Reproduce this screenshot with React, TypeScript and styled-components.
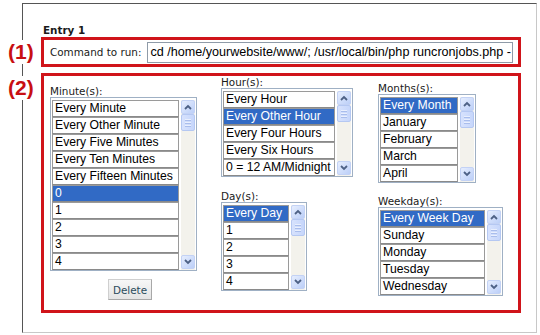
import React from 'react';
import styled, { createGlobalStyle } from 'styled-components';

const GlobalStyle = createGlobalStyle`
  html, body {
    margin: 0;
    padding: 0;
    background: #fff;
  }
  body {
    width: 540px;
    height: 335px;
    overflow: hidden;
  }
`;

const Frame = styled.div`
  position: relative;
  box-sizing: border-box;
  margin: 3px 0 0 22px;
  width: 515px;
  height: 330px;
  padding: 20px 0 0 18px;
  border-left: 1px solid #555;
  border-top: 1px solid #555;
  border-right: 1px solid #c8c8c8;
  border-bottom: 1px solid #c8c8c8;
  font-family: 'DejaVu Sans', Verdana, sans-serif;
  color: #1a1a1a;
`;

const Marker = styled.div<{ $top: number }>`
  position: absolute;
  left: -16px;
  top: ${(p) => p.$top}px;
  background: #fff;
  padding: 0 1px;
  font-family: 'Liberation Sans', Arial, sans-serif;
  font-weight: bold;
  font-size: 21px;
  line-height: 24px;
  color: #c80f12;
`;

const EntryTitle = styled.div`
  margin-left: 2px;
  font-weight: bold;
  font-size: 10.4px;
  line-height: 13px;
`;

const RedBox = styled.div`
  box-sizing: border-box;
  width: 480px;
  border: 3px solid #d0141a;
`;

const CommandBox = styled(RedBox)`
  height: 30px;
  display: flex;
  align-items: center;
  gap: 6px;
  padding-left: 6px;
`;

const FieldLabel = styled.span`
  font-size: 10.4px;
  line-height: 12px;
  white-space: nowrap;
`;

const CommandInput = styled.div`
  box-sizing: border-box;
  width: 366px;
  height: 21px;
  border: 1px solid #8f9ba8;
  padding: 0 0 0 2px;
  font-family: 'Liberation Sans', Arial, sans-serif;
  font-size: 12.6px;
  line-height: 19px;
  color: #000;
  white-space: nowrap;
  overflow: hidden;
`;

const ScheduleBox = styled(RedBox)`
  margin-top: 6px;
  height: 240px;
  display: flex;
  padding-left: 6px;
`;

const Column = styled.div<{ $width?: number; $pad: number }>`
  display: flex;
  flex-direction: column;
  align-items: flex-start;
  width: ${(p) => (p.$width ? `${p.$width}px` : 'auto')};
  padding-top: ${(p) => p.$pad}px;
`;

const Field = styled.div<{ $gap?: number }>`
  display: flex;
  flex-direction: column;
  margin-top: ${(p) => p.$gap || 0}px;
`;

const ListBox = styled.div<{ $width: number }>`
  box-sizing: border-box;
  width: ${(p) => p.$width}px;
  display: flex;
  border: 1px solid #9fb0c4;
  padding: 2px 1px 0 1px;
  gap: 2px;
  background: #fff;
`;

const Options = styled.div`
  flex: 1;
  display: flex;
  flex-direction: column;
  min-width: 0;
`;

const Option = styled.div<{ $selected?: boolean }>`
  box-sizing: border-box;
  height: 17px;
  border: 1px solid #9a9a9a;
  border-bottom-color: #8a8a8a;
  padding-left: 2px;
  font-family: 'Liberation Sans', Arial, sans-serif;
  font-size: 12.2px;
  line-height: 15px;
  white-space: nowrap;
  overflow: hidden;
  color: ${(p) => (p.$selected ? '#fff' : '#000')};
  background: ${(p) => (p.$selected ? '#316ac5' : '#fff')};
`;

const ScrollTrack = styled.div`
  width: 14px;
  display: flex;
  flex-direction: column;
  padding-bottom: 1px;
  background: #f3f2ec;
`;

const ScrollButton = styled.div`
  box-sizing: border-box;
  width: 14px;
  height: 14px;
  border: 1px solid #c3d2f5;
  border-radius: 2px;
  background: linear-gradient(135deg, #e6eefe, #bccff8);
  display: flex;
  align-items: center;
  justify-content: center;
`;

const Thumb = styled.div`
  box-sizing: border-box;
  width: 14px;
  height: 17px;
  border: 1px solid #b5c8f2;
  border-radius: 2px;
  background: linear-gradient(90deg, #d7e2fd, #c6d6fb);
  display: flex;
  flex-direction: column;
  align-items: center;
  justify-content: center;
  gap: 1px;
`;

const Grip = styled.span`
  width: 6px;
  height: 1px;
  background: #e9effd;
  box-shadow: 0 1px 0 #a9bdec;
  margin-bottom: 1px;
`;

const Spacer = styled.div`
  flex: 1;
`;

const DeleteButton = styled.button`
  box-sizing: border-box;
  width: 44px;
  height: 21px;
  margin: 8px 0 0 58px;
  padding: 0;
  border: 1px solid #cfcfcf;
  border-right-color: #a8a8a8;
  border-bottom-color: #a8a8a8;
  background: linear-gradient(#f7f7f7, #e4e4e4);
  font-family: 'DejaVu Sans', Verdana, sans-serif;
  font-size: 10.4px;
  color: #2a4b5b;
`;

const Chevron = ({ up }: { up?: boolean }) => (
  <svg width="8" height="6" viewBox="0 0 8 6">
    <path
      d={up ? 'M1 5 L4 2 L7 5' : 'M1 1 L4 4 L7 1'}
      fill="none"
      stroke="#4d6185"
      strokeWidth="1.8"
    />
  </svg>
);

const ScrollBar = () => (
  <ScrollTrack>
    <ScrollButton>
      <Chevron up />
    </ScrollButton>
    <Thumb>
      <Grip />
      <Grip />
      <Grip />
    </Thumb>
    <Spacer />
    <ScrollButton>
      <Chevron />
    </ScrollButton>
  </ScrollTrack>
);

type SelectProps = {
  label: string;
  width: number;
  items: string[];
  selected: number;
  gap?: number;
};

const Select = ({ label, width, items, selected, gap }: SelectProps) => (
  <Field $gap={gap}>
    <FieldLabel>{label}</FieldLabel>
    <ListBox $width={width}>
      <Options>
        {items.map((item, i) => (
          <Option key={item} $selected={i === selected}>
            {item}
          </Option>
        ))}
      </Options>
      <ScrollBar />
    </ListBox>
  </Field>
);

const minutes = [
  'Every Minute',
  'Every Other Minute',
  'Every Five Minutes',
  'Every Ten Minutes',
  'Every Fifteen Minutes',
  '0',
  '1',
  '2',
  '3',
  '4',
];

const hours = ['Every Hour', 'Every Other Hour', 'Every Four Hours', 'Every Six Hours', '0 = 12 AM/Midnight'];
const days = ['Every Day', '1', '2', '3', '4'];
const months = ['Every Month', 'January', 'February', 'March', 'April'];
const weekdays = ['Every Week Day', 'Sunday', 'Monday', 'Tuesday', 'Wednesday'];

const App: React.FC = () => {
  return (
    <>
      <GlobalStyle />
      <Frame>
        <Marker $top={36}>(1)</Marker>
        <Marker $top={72}>(2)</Marker>
        <EntryTitle>Entry 1</EntryTitle>
        <CommandBox>
          <FieldLabel>Command to run:</FieldLabel>
          <CommandInput>cd /home/yourwebsite/www/; /usr/local/bin/php runcronjobs.php -</CommandInput>
        </CommandBox>
        <ScheduleBox>
          <Column $width={171} $pad={9}>
            <Select label="Minute(s):" width={147} items={minutes} selected={5} />
            <DeleteButton>Delete</DeleteButton>
          </Column>
          <Column $width={157} $pad={0}>
            <Select label="Hour(s):" width={132} items={hours} selected={1} />
            <Select label="Day(s):" width={86} items={days} selected={0} gap={13} />
          </Column>
          <Column $pad={6}>
            <Select label="Months(s):" width={98} items={months} selected={0} />
            <Select label="Weekday(s):" width={125} items={weekdays} selected={0} gap={12} />
          </Column>
        </ScheduleBox>
      </Frame>
    </>
  );
};

export default App;
